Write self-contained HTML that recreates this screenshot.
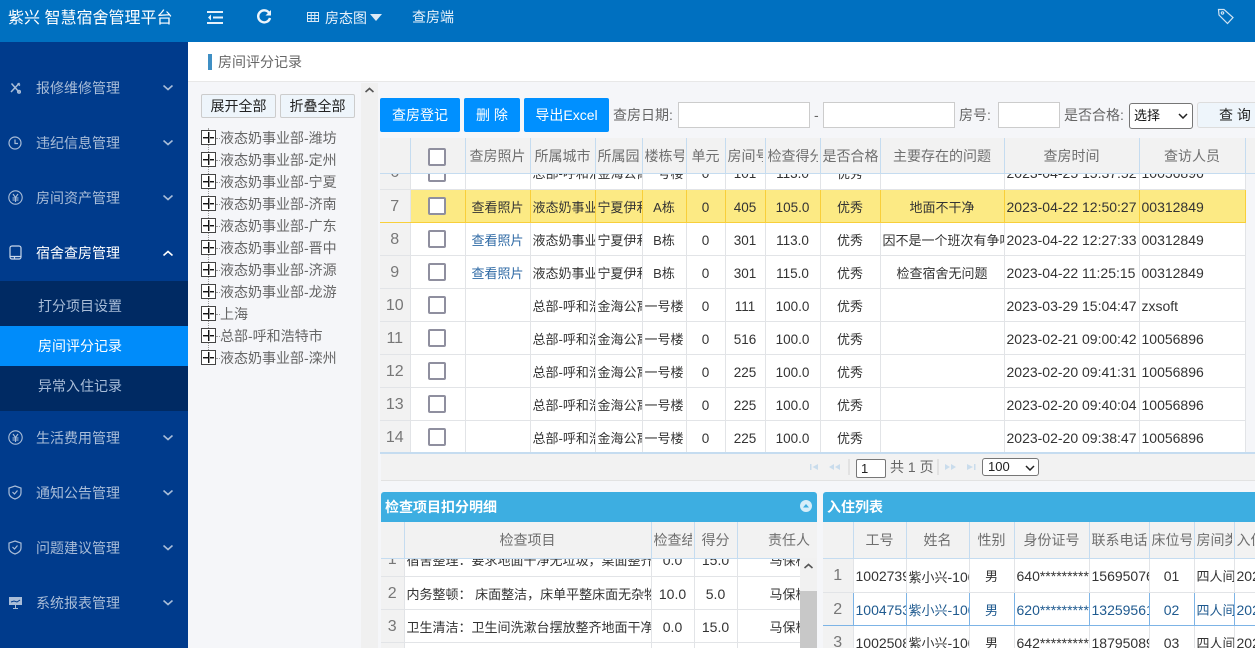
<!DOCTYPE html>
<html lang="zh"><head><meta charset="utf-8"><title>房间评分记录</title>
<style>
*{box-sizing:border-box}
html,body{margin:0;padding:0;width:1255px;height:648px;overflow:hidden;background:#f5f6f9}
body{font-family:"Liberation Sans","Noto Sans CJK SC",sans-serif;font-size:14px;color:#333;position:relative}
.a{position:absolute}
.t{position:absolute;white-space:nowrap;line-height:20px}
#top{left:0;top:0;width:1255px;height:42px;background:#0070c0}
#side{left:0;top:42px;width:188px;height:606px;background:#003b8c}
.mi{position:absolute;left:36px;color:#a9bdd8;line-height:20px;white-space:nowrap}
.sub{position:absolute;left:38px;color:#a9bdd8;line-height:20px;white-space:nowrap}
.ic{position:absolute;left:8px}
.cv{position:absolute;left:163px}
.btn{position:absolute;top:98px;height:34px;background:#0090ff;color:#fff;border-radius:2px;text-align:center;line-height:34px}
.inp{position:absolute;top:102px;height:26px;background:#fff;border:1px solid #ccc}
.lb{position:absolute;top:105px;line-height:20px;color:#666;white-space:nowrap}
.tb{position:absolute;top:94px;width:75px;height:24px;background:#eef5fb;border:1px solid #ccc;border-radius:2px;color:#222;text-align:center;line-height:22px;font-size:14px}
.node{position:absolute;left:220px;color:#666;line-height:20px;white-space:nowrap}
.node:before{content:"";position:absolute;left:-4px;top:10px;width:4px;border-top:1px dotted #999}
.box{position:absolute;left:201px;width:15px;height:15px;border:1px solid #444;background:#fff}
.box:before{content:"";position:absolute;left:1px;right:1px;top:6px;height:1px;background:#111;box-shadow:0 1px 0 #999}
.box:after{content:"";position:absolute;top:1px;bottom:1px;left:6px;width:1px;background:#111;box-shadow:1px 0 0 #999}
table{border-collapse:collapse;table-layout:fixed;position:absolute;left:0}
td,th{padding:0 2px;overflow:hidden;white-space:nowrap;text-align:center;font-weight:normal;height:33px;border-right:1px solid #e2e4e7;border-bottom:1px solid #e2e4e7;color:#333;font-size:13px;line-height:22px}
td{padding-top:4px}
th{height:36px;background:#f2f2f2;color:#6f6f6f;border-right:1px solid #c5dcf0;border-bottom:0;font-size:14px;line-height:20px}
th div{overflow:hidden;text-align:left}
td.n{background:#f2f2f2;color:#777;font-size:16px;padding:2px 0 0 0}
td.l{text-align:left;padding-left:2px}
td.d{font-size:14px;line-height:20px;padding-top:2px}
.m td:nth-child(7),.m td:nth-child(8),.m td:nth-child(9){font-size:13.500px}
.m td:nth-child(12),.m td:nth-child(13){font-size:14px;line-height:20px;padding-top:2px}
tr.y td{background:#fcea84;border-right-color:#f8cf3a;border-bottom-color:#f8cf3a}
tr.y td.n{background:#f2f2f2;border-right-color:#e2e4e7}
td a{color:#2f6aa5}
td span.w{font-size:14px}
.cb{display:inline-block;width:18px;height:18px;border:2px solid #8f8f9f;border-radius:2px;background:#fff;vertical-align:middle;position:relative;left:-1px}
td .cb{top:-2px}
tr.b td{color:#1f5a8f;border-right-color:#7db4e6;border-bottom-color:#7db4e6}
tr.b td.n{color:#777}
.hd{position:absolute;background:#3daee1;color:#fff;font-weight:bold;line-height:30px;height:30px;top:492px}
</style></head><body>

<div class="a" id="top"></div>
<div class="t" style="left:8px;top:9px;font-size:16px;color:#fff;line-height:20px">紫兴 智慧宿舍管理平台</div>
<svg class="a" style="left:207px;top:10px" width="16" height="15" viewBox="0 0 16 15" fill="none" stroke="#e6f1fa" stroke-width="2"><path d="M0 2H16M6 7.500H16M0 13H16"/><path d="M4 4.500L1 7.500L4 10.500Z" fill="#e6f1fa" stroke="none"/></svg>
<svg class="a" style="left:256px;top:9px" width="16" height="16" viewBox="0 0 16 16" fill="none" stroke="#eef5fb" stroke-width="2.400"><path d="M13.500 4.500A6 6 0 1 0 14 9"/><path d="M15 1V6.500H9.500Z" fill="#eef5fb" stroke="none"/></svg>
<svg class="a" style="left:307px;top:12px" width="12" height="10" viewBox="0 0 12 10" fill="none" stroke="#dceaf6" stroke-width="1"><path d="M.5.500H11.500V9.500H.5ZM.5 3.500H11.500M.5 6.500H11.500M4.200.5V9.500M7.800.5V9.500"/></svg>
<div class="t" style="left:325px;top:8px;color:#e8f2fa">房态图</div>
<svg class="a" style="left:370px;top:14px" width="12" height="7" viewBox="0 0 12 7"><path d="M0 0H12L6 7Z" fill="#dceaf6"/></svg>
<div class="t" style="left:412px;top:7px;color:#e8f2fa">查房端</div>
<svg class="a" style="left:1217px;top:8px" width="18" height="17" viewBox="0 0 18 17" fill="none" stroke="#cfe3f3" stroke-width="1.200"><path d="M1.500 1.500H7L16 9.500L10.500 15.500L2 7Z"/><circle cx="5.500" cy="5" r="1.200"/></svg>

<div class="a" id="side"></div>
<svg class="ic" style="left:10px;top:82px" width="11" height="12" viewBox="0 0 11 12" fill="none" stroke="#a9bdd8" stroke-width="1.500"><path d="M1.500 1.500L9 10M9.500 1L1 10"/><circle cx="9" cy="9.800" r="1.300"/><path d="M7.500 1.500L10 3.500"/></svg>
<div class="mi" style="top:78px">报修维修管理</div>
<svg class="ic" style="left:8px;top:136px" width="14" height="14" viewBox="0 0 14 14" fill="none" stroke="#a9bdd8" stroke-width="1.200"><circle cx="7" cy="7" r="6"/><path d="M7 3.500V7.500H10"/></svg>
<div class="mi" style="top:133px">违纪信息管理</div>
<svg class="ic" style="top:190px" width="15" height="15" viewBox="0 0 15 15" fill="none" stroke="#a9bdd8" stroke-width="1.100"><circle cx="7.500" cy="7.500" r="6.700"/><path d="M5 4L7.500 7.500L10 4M4.500 8H10.500M4.500 10H10.500M7.500 7.500V12"/></svg>
<div class="mi" style="top:188px">房间资产管理</div>
<svg class="ic" style="left:9px;top:245px" width="13" height="15" viewBox="0 0 13 15" fill="none" stroke="#c9d7ea" stroke-width="1.200"><rect x="1" y="1" width="11" height="13" rx="2"/><path d="M1 11.500H12M5.500 11.500V14"/></svg>
<div class="mi" style="top:243px;color:#fff">宿舍查房管理</div>

<div class="a" style="left:0;top:281px;width:188px;height:130px;background:#002a63"></div>
<div class="a" style="left:0;top:326px;width:188px;height:40px;background:#008cfa"></div>
<div class="sub" style="top:296px">打分项目设置</div>
<div class="sub" style="top:336px;color:#fff">房间评分记录</div>
<div class="sub" style="top:376px">异常入住记录</div>

<svg class="ic" style="top:430px" width="15" height="15" viewBox="0 0 15 15" fill="none" stroke="#a9bdd8" stroke-width="1.100"><circle cx="7.500" cy="7.500" r="6.700"/><path d="M5 4L7.500 7.500L10 4M4.500 8H10.500M4.500 10H10.500M7.500 7.500V12"/></svg>
<div class="mi" style="top:428px">生活费用管理</div>
<svg class="ic" style="top:485px" width="14" height="15" viewBox="0 0 14 15" fill="none" stroke="#a9bdd8" stroke-width="1.200"><path d="M7 1L13 3V8C13 11 10 13 7 14C4 13 1 11 1 8V3Z"/><path d="M4.500 7L6.500 9L9.500 5.500"/></svg>
<div class="mi" style="top:483px">通知公告管理</div>
<svg class="ic" style="top:540px" width="14" height="15" viewBox="0 0 14 15" fill="none" stroke="#a9bdd8" stroke-width="1.200"><path d="M7 1L13 3V8C13 11 10 13 7 14C4 13 1 11 1 8V3Z"/><path d="M4.500 7L6.500 9L9.500 5.500"/></svg>
<div class="mi" style="top:538px">问题建议管理</div>
<svg class="ic" style="left:9px;top:596px" width="13" height="13" viewBox="0 0 13 13"><path d="M0 1H13V9H0Z" fill="#a9bdd8"/><path d="M6 9H7V12H9V13H4V12H6Z" fill="#a9bdd8"/><path d="M2 6L5 5L8 6L11 4" stroke="#003b8c" fill="none"/></svg>
<div class="mi" style="top:593px">系统报表管理</div>

<svg class="cv" style="top:85px" width="10" height="6" viewBox="0 0 10 6" fill="none" stroke="#a9bdd8" stroke-width="1.600"><path d="M.5.500L5 4.500L9.500.500"/></svg>
<svg class="cv" style="top:140px" width="10" height="6" viewBox="0 0 10 6" fill="none" stroke="#a9bdd8" stroke-width="1.600"><path d="M.5.500L5 4.500L9.500.500"/></svg>
<svg class="cv" style="top:195px" width="10" height="6" viewBox="0 0 10 6" fill="none" stroke="#a9bdd8" stroke-width="1.600"><path d="M.5.500L5 4.500L9.500.500"/></svg>
<svg class="cv" style="top:250px" width="10" height="6" viewBox="0 0 10 6" fill="none" stroke="#fff" stroke-width="1.600"><path d="M.5 5.500L5 1.500L9.500 5.500"/></svg>
<svg class="cv" style="top:435px" width="10" height="6" viewBox="0 0 10 6" fill="none" stroke="#a9bdd8" stroke-width="1.600"><path d="M.5.500L5 4.500L9.500.500"/></svg>
<svg class="cv" style="top:490px" width="10" height="6" viewBox="0 0 10 6" fill="none" stroke="#a9bdd8" stroke-width="1.600"><path d="M.5.500L5 4.500L9.500.500"/></svg>
<svg class="cv" style="top:545px" width="10" height="6" viewBox="0 0 10 6" fill="none" stroke="#a9bdd8" stroke-width="1.600"><path d="M.5.500L5 4.500L9.500.500"/></svg>
<svg class="cv" style="top:600px" width="10" height="6" viewBox="0 0 10 6" fill="none" stroke="#a9bdd8" stroke-width="1.600"><path d="M.5.500L5 4.500L9.500.500"/></svg>

<div class="a" style="left:188px;top:42px;width:1067px;height:40px;background:#fff;border-bottom:1px solid #e8e8e8"></div>
<div class="a" style="left:208px;top:54px;width:4px;height:16px;background:#3f8fc4"></div>
<div class="t" style="left:218px;top:52px;color:#666">房间评分记录</div>

<div class="a" style="left:361px;top:83px;width:17px;height:565px;background:#f0f0f0"></div>
<svg class="a" style="left:365px;top:87px" width="9" height="6" viewBox="0 0 9 6" fill="none" stroke="#555" stroke-width="1.600"><path d="M.5 5L4.500 1.500L8.500 5"/></svg>

<div class="tb" style="left:201px">展开全部</div>
<div class="tb" style="left:280px">折叠全部</div>
<div class="a" style="left:208px;top:128px;height:230px;border-left:1px dotted #999"></div>
<div class="box" style="top:130px"></div><div class="node" style="top:128px">液态奶事业部-潍坊</div>
<div class="box" style="top:152px"></div><div class="node" style="top:150px">液态奶事业部-定州</div>
<div class="box" style="top:174px"></div><div class="node" style="top:172px">液态奶事业部-宁夏</div>
<div class="box" style="top:196px"></div><div class="node" style="top:194px">液态奶事业部-济南</div>
<div class="box" style="top:218px"></div><div class="node" style="top:216px">液态奶事业部-广东</div>
<div class="box" style="top:240px"></div><div class="node" style="top:238px">液态奶事业部-晋中</div>
<div class="box" style="top:262px"></div><div class="node" style="top:260px">液态奶事业部-济源</div>
<div class="box" style="top:284px"></div><div class="node" style="top:282px">液态奶事业部-龙游</div>
<div class="box" style="top:306px"></div><div class="node" style="top:304px">上海</div>
<div class="box" style="top:328px"></div><div class="node" style="top:326px">总部-呼和浩特市</div>
<div class="box" style="top:350px"></div><div class="node" style="top:348px">液态奶事业部-滦州</div>

<div class="btn" style="left:380px;width:80px">查房登记</div>
<div class="btn" style="left:464px;width:56px">删 除</div>
<div class="btn" style="left:524px;width:85px">导出Excel</div>
<div class="lb" style="left:613px">查房日期:</div>
<div class="inp" style="left:678px;width:132px"></div>
<div class="lb" style="left:814px">-</div>
<div class="inp" style="left:823px;width:132px"></div>
<div class="lb" style="left:959px">房号:</div>
<div class="inp" style="left:998px;width:62px"></div>
<div class="lb" style="left:1064px">是否合格:</div>
<div class="a" style="left:1129px;top:103px;width:64px;height:26px;background:#fff;border:1px solid #767676;border-radius:3px;padding-left:4px;line-height:24px;font-size:13px;color:#111">选择<svg class="a" style="left:48px;top:9px" width="10" height="6" viewBox="0 0 10 6" fill="none" stroke="#222" stroke-width="1.500"><path d="M1 1L5 5L9 1"/></svg></div>
<div class="a" style="left:1197px;top:102px;width:70px;height:26px;background:#eef5fb;border:1px solid #ddd;border-radius:3px;color:#222;line-height:24px;padding-left:21px">查 询</div>

<!-- main table -->
<div class="a" style="left:380px;top:138px;width:875px;height:36px;overflow:hidden;background:#f2f2f2;border-bottom:1px solid #c5dcf0">
<table style="top:0;width:865px"><colgroup><col width="30"><col width="55"><col width="65"><col width="65"><col width="47"><col width="44"><col width="39"><col width="40"><col width="55"><col width="60"><col width="124"><col width="135"><col width="106"></colgroup>
<tr><th></th><th><span class="cb"></span></th><th>查房照片</th><th>所属城市</th><th><div>所属园区</div></th><th><div>楼栋号</div></th><th>单元</th><th><div>房间号</div></th><th><div>检查得分</div></th><th><div>是否合格</div></th><th>主要存在的问题</th><th>查房时间</th><th>查访人员</th></tr></table></div>

<div class="a" style="left:380px;top:174px;width:875px;height:280px;overflow:hidden;background:#fff;border-bottom:2px solid #c5dcf0">
<div class="a" style="left:865px;top:0;width:10px;height:280px;background:#f5f6f9"></div>
<table class="m" style="top:-18px;width:865px"><colgroup><col width="30"><col width="55"><col width="65"><col width="65"><col width="47"><col width="44"><col width="39"><col width="40"><col width="55"><col width="60"><col width="124"><col width="135"><col width="106"></colgroup>
<tr><td class="n">6</td><td><span class="cb"></span></td><td></td><td class="l">总部-呼和浩特</td><td class="l">金海公寓</td><td>一号楼</td><td>0</td><td>101</td><td>113.0</td><td>优秀</td><td></td><td class="l">2023-04-25 15:37:52</td><td class="l">10056896</td></tr>
<tr class="y"><td class="n">7</td><td><span class="cb"></span></td><td>查看照片</td><td class="l">液态奶事业部</td><td class="l">宁夏伊利</td><td>A栋</td><td>0</td><td>405</td><td>105.0</td><td>优秀</td><td>地面不干净</td><td class="l">2023-04-22 12:50:27</td><td class="l">00312849</td></tr>
<tr><td class="n">8</td><td><span class="cb"></span></td><td><a>查看照片</a></td><td class="l">液态奶事业部</td><td class="l">宁夏伊利</td><td>B栋</td><td>0</td><td>301</td><td>113.0</td><td>优秀</td><td class="l">因不是一个班次有争吵</td><td class="l">2023-04-22 12:27:33</td><td class="l">00312849</td></tr>
<tr><td class="n">9</td><td><span class="cb"></span></td><td><a>查看照片</a></td><td class="l">液态奶事业部</td><td class="l">宁夏伊利</td><td>B栋</td><td>0</td><td>301</td><td>115.0</td><td>优秀</td><td>检查宿舍无问题</td><td class="l">2023-04-22 11:25:15</td><td class="l">00312849</td></tr>
<tr><td class="n">10</td><td><span class="cb"></span></td><td></td><td class="l">总部-呼和浩特</td><td class="l">金海公寓</td><td>一号楼</td><td>0</td><td>111</td><td>100.0</td><td>优秀</td><td></td><td class="l">2023-03-29 15:04:47</td><td class="l">zxsoft</td></tr>
<tr><td class="n">11</td><td><span class="cb"></span></td><td></td><td class="l">总部-呼和浩特</td><td class="l">金海公寓</td><td>一号楼</td><td>0</td><td>516</td><td>100.0</td><td>优秀</td><td></td><td class="l">2023-02-21 09:00:42</td><td class="l">10056896</td></tr>
<tr><td class="n">12</td><td><span class="cb"></span></td><td></td><td class="l">总部-呼和浩特</td><td class="l">金海公寓</td><td>一号楼</td><td>0</td><td>225</td><td>100.0</td><td>优秀</td><td></td><td class="l">2023-02-20 09:41:31</td><td class="l">10056896</td></tr>
<tr><td class="n">13</td><td><span class="cb"></span></td><td></td><td class="l">总部-呼和浩特</td><td class="l">金海公寓</td><td>一号楼</td><td>0</td><td>225</td><td>100.0</td><td>优秀</td><td></td><td class="l">2023-02-20 09:40:04</td><td class="l">10056896</td></tr>
<tr><td class="n">14</td><td><span class="cb"></span></td><td></td><td class="l">总部-呼和浩特</td><td class="l">金海公寓</td><td>一号楼</td><td>0</td><td>225</td><td>100.0</td><td>优秀</td><td></td><td class="l">2023-02-20 09:38:47</td><td class="l">10056896</td></tr>
</table></div>

<!-- pager -->
<div class="a" style="left:381px;top:454px;width:874px;height:27px;background:#f2f2f2;border-bottom:1px solid #e2e2e2"></div>
<svg class="a" style="left:810px;top:463px" width="34" height="8" viewBox="0 0 34 8" fill="#c9dcec"><path d="M0 1H1.500V7H0ZM8 1V7L2.500 4ZM24 1V7L19 4ZM30 1V7L25 4Z"/></svg>
<div class="a" style="left:848px;top:459px;width:2px;height:16px;background:#e2e2e2"></div>
<div class="a" style="left:856px;top:459px;width:30px;height:19px;background:#fff;border:1px solid #777;border-radius:2px;font-size:13px;line-height:18px;padding-left:4px;color:#222">1</div>
<div class="t" style="left:890px;top:457px;color:#666">共 1 页</div>
<div class="a" style="left:937px;top:459px;width:2px;height:16px;background:#e2e2e2"></div>
<svg class="a" style="left:945px;top:463px" width="33" height="8" viewBox="0 0 33 8" fill="#c9dcec"><path d="M0 1V7L5 4ZM6 1V7L11 4ZM22 1V7L28 4ZM29 1H30.500V7H29Z"/></svg>
<div class="a" style="left:982px;top:458px;width:57px;height:18px;background:#fff;border:1px solid #767676;border-radius:3px;font-size:13px;line-height:16px;padding-left:5px;color:#222">100<svg class="a" style="left:42px;top:6px" width="10" height="6" viewBox="0 0 10 6" fill="none" stroke="#222" stroke-width="1.500"><path d="M1 1L5 5L9 1"/></svg></div>

<!-- left bottom panel -->
<div class="hd" style="left:381px;width:436px;border-radius:3px 3px 0 0;padding-left:4px">检查项目扣分明细</div>
<svg class="a" style="left:800px;top:500px" width="12" height="12" viewBox="0 0 12 12"><circle cx="6" cy="6" r="6" fill="#d8eef9"/><path d="M3 7.500L6 4L9 7.500Z" fill="#3daee1"/></svg>
<div class="a" style="left:381px;top:522px;width:436px;height:126px;overflow:hidden;background:#fff">
<table style="top:0;width:436px"><colgroup><col width="23"><col width="247"><col width="43"><col width="43"><col width="80"></colgroup>
<tr><th></th><th>检查项目</th><th><div>检查结果</div></th><th>得分</th><th style="border-right:0;text-align:right;padding-right:7px">责任人</th></tr></table>
<div class="a" style="left:0;top:36px;width:436px;height:1px;background:#c5dcf0"></div>
<div class="a" style="left:0;top:37px;width:436px;height:90px;overflow:hidden">
<table style="top:-16px;width:436px"><colgroup><col width="23"><col width="247"><col width="43"><col width="43"><col width="80"></colgroup>
<tr><td class="n">1</td><td class="l">宿舍整理：要求地面干净无垃圾，桌面整齐</td><td class="d">0.0</td><td class="d">15.0</td><td style="text-align:left;padding-left:32px">马保根</td></tr>
<tr><td class="n">2</td><td class="l">内务整顿： 床面整洁，床单平整床面无杂物</td><td class="d">10.0</td><td class="d">5.0</td><td style="text-align:left;padding-left:32px">马保根</td></tr>
<tr><td class="n">3</td><td class="l">卫生清洁：卫生间洗漱台摆放整齐地面干净</td><td class="d">0.0</td><td class="d">15.0</td><td style="text-align:left;padding-left:32px">马保根</td></tr>
<tr><td class="n">4</td><td></td><td></td><td></td><td></td></tr>
</table></div>
<div class="a" style="left:419px;top:36px;width:17px;height:90px;background:#f1f1f1"></div>
<div class="a" style="left:419px;top:69px;width:17px;height:60px;background:#c8c8c8"></div>
<svg class="a" style="left:423px;top:41px" width="9" height="6" viewBox="0 0 9 6" fill="none" stroke="#555" stroke-width="1.600"><path d="M.5 5L4.500 1.500L8.500 5"/></svg>
</div>

<!-- right bottom panel -->
<div class="hd" style="left:823px;width:432px;border-radius:3px 0 0 0;padding-left:4px">入住列表</div>
<div class="a" style="left:823px;top:522px;width:432px;height:126px;overflow:hidden;background:#fff">
<table style="top:0;width:440px"><colgroup><col width="30"><col width="53"><col width="63"><col width="45"><col width="75"><col width="60"><col width="45"><col width="40"><col width="29"></colgroup>
<tr><th></th><th>工号</th><th>姓名</th><th>性别</th><th>身份证号</th><th><div>联系电话</div></th><th><div>床位号</div></th><th><div>房间类</div></th><th><div>入住</div></th></tr></table>
<div class="a" style="left:0;top:36px;width:432px;height:1px;background:#c5dcf0"></div>
<div class="a" style="left:0;top:37px;width:432px;height:90px;overflow:hidden">
<table style="top:0;width:440px"><colgroup><col width="30"><col width="53"><col width="63"><col width="45"><col width="75"><col width="60"><col width="45"><col width="40"><col width="29"></colgroup>
<tr><td class="n">1</td><td class="l d">10027395</td><td class="l">紫小兴<span class="w">-1002</span></td><td>男</td><td class="l d">640*********</td><td class="l d">15695076</td><td class="d">01</td><td class="l">四人间</td><td class="l d">2023</td></tr>
<tr class="b"><td class="n">2</td><td class="l d">10047535</td><td class="l">紫小兴<span class="w">-1004</span></td><td>男</td><td class="l d">620*********</td><td class="l d">13259561</td><td class="d">02</td><td class="l">四人间</td><td class="l d">2023</td></tr>
<tr><td class="n">3</td><td class="l d">10025088</td><td class="l">紫小兴<span class="w">-1002</span></td><td>男</td><td class="l d">642*********</td><td class="l d">18795089</td><td class="d">03</td><td class="l">四人间</td><td class="l d">2023</td></tr>
</table></div>
</div>
</body></html>
